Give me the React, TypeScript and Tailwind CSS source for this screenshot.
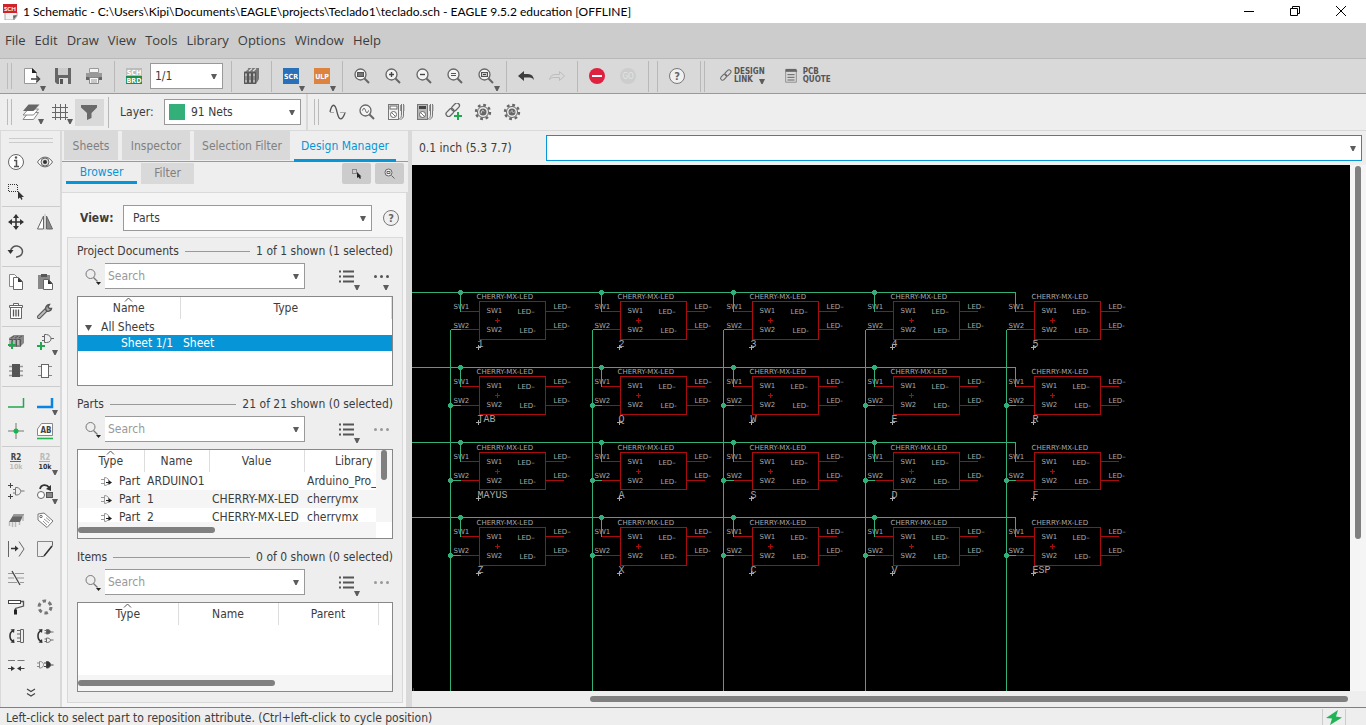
import React from 'react';
import clsx from 'clsx';

const UI_FONT = 'font-[DejaVu_Sans_Condensed,Noto_Sans,sans-serif]';
const TITLE_FONT = 'font-[Lato,Noto_Sans,sans-serif]';
const MENU_FONT = 'font-[Open_Sans,Noto_Sans,sans-serif]';

const Svg = ({ size = 18, children, className }: any) => (
  <svg
    width={size}
    height={size}
    viewBox="0 0 18 18"
    fill="none"
    stroke="#666"
    strokeWidth="1"
    className={clsx('shrink-0', className)}
    aria-hidden="true"
  >
    {children}
  </svg>
);

const Caret = ({ className }: any) => (
  <svg width="6" height="5" viewBox="0 0 6 5" className={className} aria-hidden="true">
    <path d="M0 0h6L3.600 5H2.400z" fill="#5c5c5c" />
  </svg>
);

const Magnifier = ({ children }: any) => (
  <Svg>
    <circle cx="7.500" cy="7.500" r="5.500" fill="#f4f4f4" stroke="#666" strokeWidth="1.300" />
    <path d="M11.500 11.500L16 16" stroke="#666" strokeWidth="2" />
    {children}
  </Svg>
);

const Gear = ({ children }: any) => (
  <Svg>
    <circle cx="9" cy="9" r="7" strokeWidth="2.400" strokeDasharray="2.750 2.750" stroke="#666" />
    <circle cx="9" cy="9" r="5.500" fill="#ececec" stroke="#666" />
    <circle cx="9" cy="9" r="3.500" fill="#666" stroke="none" />
    {children}
  </Svg>
);

const Meter = ({ dark }: any) => (
  <Svg>
    <rect x="1.500" y="1.500" width="10" height="15" fill={dark ? '#b8b8b8' : '#f2f2f2'} stroke="#777" />
    <rect x="3" y="3" width="7" height="3" fill={dark ? '#444' : '#fff'} strokeWidth={dark ? 0 : 1} />
    <circle cx="6.500" cy="11.500" r="3" fill="#fff" />
    <path d="M4.500 9.500l4 4M14.500 1v10c0 4-1.500 5-3 5M16.500 1v11c0 3-1.500 4-3 4.500" stroke="#777" />
    <path d="M13.500 2v6M17 2v6" stroke="#999" />
  </Svg>
);

const LinkShape = () => (
  <g strokeWidth="1.300">
    <rect x="7" y="2.500" width="9" height="5" rx="2.500" transform="rotate(-45 11.500 5)" />
    <rect x="1.500" y="8" width="9" height="5" rx="2.500" transform="rotate(-45 6 10.500)" />
  </g>
);

const Plus = ({ x, y, r = 3 }: any) => (
  <path d={`M${x - r} ${y}h${r * 2}M${x} ${y - r}v${r * 2}`} stroke="#23a650" strokeWidth="2" />
);

const icons: Record<string, React.ReactNode> = {
  newDoc: (
    <Svg>
      <path d="M1.500 1.500h8l4 4v11h-12z" fill="#fff" stroke="#999" />
      <path d="M9 1l5 5H9z" fill="#222" stroke="none" />
      <path d="M8 12h8M13.500 9l3 3-3 3" stroke="#444" strokeWidth="1.500" />
    </Svg>
  ),
  save: (
    <Svg>
      <path d="M1 1h16v16H3l-2-2z" fill="#666" stroke="none" />
      <path d="M4 1h10v7H4z" fill="#ccc" stroke="none" />
      <path d="M5 11h9v6H5z" fill="#ddd" stroke="none" />
      <path d="M6 12h3v5H6z" fill="#555" stroke="none" />
    </Svg>
  ),
  print: (
    <Svg>
      <path d="M4.500 1.500h9v4h-9z" fill="#f4f4f4" stroke="#999" />
      <path d="M1 6h16v7H1z" fill="#999" stroke="none" />
      <path d="M1 10h16v3H1z" fill="#666" stroke="none" />
      <path d="M4.500 10.500h9v6h-9z" fill="#f6f6f6" stroke="#888" />
      <path d="M6 13h6M6 15h6" stroke="#999" />
    </Svg>
  ),
  board: (
    <Svg>
      <rect x="1" y="1" width="16" height="8" fill="#bbb" stroke="none" />
      <rect x="1" y="9" width="16" height="8" fill="#1d8d48" stroke="none" />
      <text x="9" y="7.800" textAnchor="middle" fontSize="7" fontWeight="700" fill="#fff" stroke="none">SCH</text>
      <text x="9" y="15.800" textAnchor="middle" fontSize="7" fontWeight="700" fill="#fff" stroke="none">BRD</text>
    </Svg>
  ),
  books: (
    <Svg>
      <path d="M2 5l4-4h11v11l-3 5H2z" fill="#777" stroke="none" />
      <path d="M2.500 5.500h3v11h-3zM6.500 5.500h3v11h-3zM10.500 5.500h3v11h-3z" stroke="#555" fill="#8a8a8a" />
      <path d="M3 4l3-2.500M7 4l3-2.500M11 4l3-2.500" stroke="#ddd" strokeWidth="1.400" />
      <path d="M3 8h2M7 8h2M11 8h2M3 14h2M7 14h2M11 14h2" stroke="#ddd" />
    </Svg>
  ),
  scr: (
    <Svg>
      <rect x="1" y="1" width="16" height="16" fill="#2a70b8" stroke="none" />
      <text x="9" y="11.800" textAnchor="middle" fontSize="7" fontWeight="700" fill="#fff" stroke="none">SCR</text>
    </Svg>
  ),
  ulp: (
    <Svg>
      <rect x="1" y="1" width="16" height="16" fill="#dc8340" stroke="none" />
      <text x="9" y="11.800" textAnchor="middle" fontSize="7" fontWeight="700" fill="#fff" stroke="none">ULP</text>
    </Svg>
  ),
  zoomFit: <Magnifier><rect x="4.500" y="5.500" width="6" height="4" fill="#777" stroke="#555" /></Magnifier>,
  zoomIn: <Magnifier><path d="M5 7.500h5M7.500 5v5" stroke="#444" strokeWidth="1.400" /></Magnifier>,
  zoomOut: <Magnifier><path d="M5 7.500h5" stroke="#444" strokeWidth="1.400" /></Magnifier>,
  zoomRedraw: <Magnifier><path d="M5 6.500h5M5 8.500h5" stroke="#555" /></Magnifier>,
  zoomSelect: <Magnifier><rect x="4.500" y="5.500" width="6" height="4" stroke="#555" fill="#ccc" /><path d="M6 7.500h3" stroke="#444" /></Magnifier>,
  undo: <Svg><path d="M1 9l6-5v3h4c3.500 0 5.500 2 6 6-2-2.500-3.500-2.500-6-2.500H7v3.500z" fill="#3c3c3c" stroke="none" /></Svg>,
  redo: <Svg><path d="M16.500 9l-5-4.500v3H7c-3 0-5 2-5.500 5 2-2 3-2 5.500-2h4.500v3z" stroke="#bdbdbd" /></Svg>,
  stop: (
    <Svg>
      <circle cx="9" cy="9" r="8" fill="#df2140" stroke="none" />
      <path d="M4 9h10" stroke="#fff" strokeWidth="2" />
    </Svg>
  ),
  go: (
    <Svg>
      <circle cx="9" cy="9" r="8" fill="#cdcdcd" stroke="none" />
      <text x="9" y="12" textAnchor="middle" fontSize="8" fill="#e4e4e4" stroke="none">GO</text>
    </Svg>
  ),
  help: (
    <Svg>
      <circle cx="9" cy="9" r="7.500" fill="#f0f0f0" stroke="#777" />
      <text x="9" y="13" textAnchor="middle" fontSize="11" fontWeight="700" fill="#666" stroke="none">?</text>
    </Svg>
  ),
  layers: (
    <Svg>
      <path d="M6.500 9.500h10l-5 7H1z" fill="#fff" stroke="#888" />
      <path d="M6.500 6h10l-5 6H1z" fill="#fff" stroke="#888" />
      <path d="M6.500 1.500h11l-6 6.500H1z" fill="#666" stroke="none" />
    </Svg>
  ),
  grid: <Svg><path d="M4.500 1v16M9.500 1v16M14.500 1v16M1 4.500h16M1 9.500h16M1 14.500h16" stroke="#666" /></Svg>,
  funnel: <Svg><path d="M1 2h16v2.500L11.500 10v5L7 17v-7L1 4.500z" fill="#6a6a6a" stroke="none" /></Svg>,
  sine: (
    <Svg>
      <path d="M1 9c2-9 5-9 7 0s5 9 8 1" strokeWidth="1.300" stroke="#555" />
      <path d="M1 9.500h4M11 9.500h6" stroke="#aaa" />
    </Svg>
  ),
  zoomSine: <Magnifier><path d="M4.500 7.500c1-3 2-3 3 0s2 3 3 0" stroke="#555" /></Magnifier>,
  meter: <Meter />,
  meterDark: <Meter dark />,
  linkAdd: <Svg><g transform="translate(-1 -1)"><LinkShape /></g><Plus x={13} y={13} r={4} /></Svg>,
  gear: <Gear><path d="M7 10.500c1-4 2-4 3-2" stroke="#ddd" /></Gear>,
  gearSine: <Gear><path d="M6.500 9h1.500l1-2 1 3 1-1h1" stroke="#aaa" /></Gear>,

  info: (
    <Svg>
      <circle cx="9" cy="9" r="7.500" fill="#fff" />
      <path d="M7 7.500h2.500v6M7 13.500h5" stroke="#555" strokeWidth="1.500" />
      <circle cx="9" cy="4.500" r="1.200" fill="#555" stroke="none" />
    </Svg>
  ),
  eye: (
    <Svg>
      <path d="M1.500 9c4-6.500 11-6.500 15 0-4 6.500-11 6.500-15 0z" fill="#fff" />
      <circle cx="9" cy="9" r="4" fill="#ddd" />
      <circle cx="9" cy="9" r="2" fill="#333" stroke="none" />
    </Svg>
  ),
  groupSelect: (
    <Svg>
      <rect x="1.500" y="2.500" width="9" height="7" strokeDasharray="1 1" strokeDashoffset=".5" stroke="#333" shapeRendering="crispEdges" />
      <path d="M11 9v8l2-1.500 1.500 2.500 1-1L14.500 15H17z" fill="#333" stroke="none" />
    </Svg>
  ),
  move: (
    <Svg>
      <path d="M9 2v14M2 9h14" stroke="#333" strokeWidth="1.600" />
      <path d="M9 1l3 4H6zM9 17l3-4H6zM1 9l4-3v6zM17 9l-4-3v6z" fill="#333" stroke="none" />
    </Svg>
  ),
  mirror: (
    <Svg>
      <path d="M7.500 3v13H1.500z" fill="#fff" />
      <path d="M10.500 3v13h6z" fill="#888" />
      <path d="M9 1v16" stroke="#bbb" />
    </Svg>
  ),
  rotate: (
    <Svg>
      <path d="M3.500 9a6 5.500 0 1 1 5.500 6" stroke="#555" strokeWidth="1.500" />
      <path d="M0.500 8h6L3.500 12z" fill="#333" stroke="none" />
    </Svg>
  ),
  copy: (
    <Svg>
      <path d="M2.500 1.500h5l3 3v9h-8z" fill="#fff" stroke="#888" />
      <path d="M6.500 4.500h5l4 4v8h-9z" fill="#fff" />
      <path d="M11 4.500v4.500h4.500z" fill="#333" stroke="none" />
    </Svg>
  ),
  paste: (
    <Svg>
      <rect x="2" y="2" width="12" height="14" fill="#888" stroke="none" />
      <rect x="5" y="1" width="6" height="3" fill="#555" stroke="none" />
      <path d="M7.500 6.500h5l4 4v6h-9z" fill="#fff" />
      <path d="M12 6.500V11h4.500z" fill="#333" stroke="none" />
    </Svg>
  ),
  trash: (
    <Svg>
      <path d="M3.500 5.500h11V16.500h-11zM2.500 3.500h13v2h-13zM6.500 1.500h5v2h-5z" fill="#fff" />
      <path d="M6.500 7.500v7M9 7.500v7M11.500 7.500v7" stroke="#555" strokeWidth="1.300" />
    </Svg>
  ),
  wrench: (
    <Svg>
      <path d="M3 15l8-8" stroke="#555" strokeWidth="4" strokeLinecap="round" />
      <path d="M3 15l8-8" stroke="#bbb" strokeWidth="2" strokeLinecap="round" />
      <path d="M15.500 6.500a3.500 3.500 0 0 1-5 2.500 4 4 0 0 1 3-6.500L12 5l1.500 1.500z" fill="#aaa" stroke="#555" strokeWidth="1.400" />
    </Svg>
  ),
  addPart: (
    <Svg>
      <path d="M2 5l5-3h10v8l-4 4H2z" fill="#888" stroke="none" />
      <path d="M2.500 6.500h3v6M6.500 6.500h3v7M10.500 6.500h3v7M4 5l3-2M8 5l3-2M12 5l3-2" stroke="#555" />
      <path d="M3 7v5M7 7v5M11 7v5" stroke="#ddd" />
      <Plus x={5} y={12} r={4} />
    </Svg>
  ),
  addGate: (
    <Svg>
      <path d="M8.500 1.500h2c6 1 6 8 0 8h-2zM6 3.500h2.500M6 7.500h2.500M15 5.500h3" />
      <Plus x={5} y={13} r={4} />
    </Svg>
  ),
  chip: (
    <Svg>
      <path d="M2 4.500h3M2 9h3M2 13.500h3M13 4.500h3M13 9h3M13 13.500h3" stroke="#999" strokeWidth="1.500" />
      <rect x="5" y="2" width="8" height="13" fill="#555" stroke="none" />
    </Svg>
  ),
  chipOpen: (
    <Svg>
      <path d="M2 4.500h3M2 13.500h3M13 4.500h3M13 13.500h3" stroke="#888" />
      <rect x="5.500" y="2.500" width="7" height="13" fill="#fff" />
    </Svg>
  ),
  net: <Svg><path d="M1 14h15.500V5" stroke="#23a650" strokeWidth="1.500" /></Svg>,
  bus: <Svg><path d="M1 14h15V5" stroke="#0a84e0" strokeWidth="2.500" /></Svg>,
  junction: (
    <Svg>
      <path d="M9 1v16M1 9h16" stroke="#777" />
      <circle cx="9" cy="9" r="2.500" fill="#1bb34d" stroke="none" />
    </Svg>
  ),
  label: (
    <Svg>
      <path d="M1.500 7l4-5.500h11v12h-15z" fill="#fff" stroke="#888" />
      <path d="M1 16.500h16" stroke="#23b450" strokeWidth="1.600" />
      <text x="10" y="10.500" textAnchor="middle" fontSize="8" fontWeight="700" fill="#444" stroke="none">AB</text>
    </Svg>
  ),
  nameTag: (
    <Svg>
      <text x="9" y="7" textAnchor="middle" fontSize="8" fontWeight="700" fill="#444" stroke="none">R2</text>
      <path d="M3 8.500h11" stroke="#666" />
      <text x="9" y="16" textAnchor="middle" fontSize="7" fontWeight="700" fill="#bbb" stroke="none">10k</text>
    </Svg>
  ),
  valueTag: (
    <Svg>
      <text x="9" y="7" textAnchor="middle" fontSize="8" fontWeight="700" fill="#bbb" stroke="none">R2</text>
      <path d="M3 8.500h11" stroke="#aaa" />
      <text x="9" y="16" textAnchor="middle" fontSize="7" fontWeight="700" fill="#333" stroke="none">10k</text>
    </Svg>
  ),
  gateSwap: (
    <Svg>
      <path d="M1 3.500h5M3.500 1v5M1 14.500h5M3.500 12v5" stroke="#444" />
      <path d="M8.500 5.500h1.500c5 1 5 7 0 7.500H8.500zM6 7.500h2.500M6 11h2.500M14 9h3.500" stroke="#777" />
    </Svg>
  ),
  replace: (
    <Svg>
      <circle cx="5" cy="13" r="3.500" fill="#fff" />
      <rect x="10.500" y="10.500" width="6" height="5" fill="#888" stroke="#555" />
      <path d="M4 7c1-5 7-5 9-1.500" stroke="#333" strokeWidth="1.800" />
      <path d="M15 3v6l-5-2z" fill="#333" stroke="none" />
    </Svg>
  ),
  smash: (
    <Svg>
      <path d="M7 3h10l-4 8H2z" fill="#666" stroke="none" />
      <path d="M7 3h10l-1 2.500H5.500z" fill="#999" stroke="none" />
      <path d="M2.500 15v-4M5.500 16v-5M8.500 16v-5M12.500 14v-3M16 10V5" stroke="#bbb" strokeWidth="1.500" />
    </Svg>
  ),
  tag: (
    <Svg>
      <path d="M2 3l6-1 9 8-6 6.500L2 9z" fill="#fff" stroke="#777" />
      <circle cx="5" cy="5.500" r="1.200" />
      <path d="M8 8l5 4M10 6.500l4 3.500M7 10l4 4" stroke="#999" />
    </Svg>
  ),
  split: (
    <Svg>
      <path d="M1.500 1v16M12 1.500l5 7.500-5 7.500" />
      <path d="M4 8.500h6" stroke="#333" strokeWidth="1.500" />
      <path d="M8 5.500l3.500 3L8 11.500z" fill="#333" stroke="none" />
    </Svg>
  ),
  miter: (
    <Svg>
      <path d="M16.500 1.500h-15v15h3" stroke="#888" />
      <path d="M16.500 1.500v4l-9 11h-3" />
      <path d="M16 6l-8 10" stroke="#333" strokeWidth="1.500" />
    </Svg>
  ),
  ripup: (
    <Svg>
      <path d="M1 4.500h5M1 9h6M1 13.500h9M8 4.500h9M10 9h7M13 13.500h4" stroke="#999" />
      <path d="M5 2l8 14" stroke="#444" strokeWidth="1.300" />
    </Svg>
  ),
  paint: (
    <Svg>
      <rect x="1.500" y="2.500" width="12" height="3" fill="#fff" stroke="#444" />
      <path d="M14 3.500h2.500V8l-8 2.500V12" stroke="#555" strokeWidth="1.300" />
      <path d="M8.500 11.500v5" stroke="#222" strokeWidth="3" />
    </Svg>
  ),
  array: (
    <Svg><circle cx="9" cy="9" r="6" stroke="#777" strokeWidth="3" strokeDasharray="3.500 2.780" /></Svg>
  ),
  pinSwap: (
    <Svg>
      <path d="M6 4C2 5 2 13 6 14" stroke="#333" strokeWidth="1.600" />
      <path d="M3.500 2.500l4-.5L7 6zM3.500 15.500l4 .5-.500-4z" fill="#333" stroke="none" />
      <path d="M13.500 2.500h3v13h-3zM10 3.500h3.500M10 7h3.500M10 11h3.500M10 14.500h3.500" />
    </Svg>
  ),
  gatesSwap: (
    <Svg>
      <path d="M5 4C1 5 1 13 5 14" stroke="#333" strokeWidth="1.600" />
      <path d="M2.500 2.500l4-.5L6 6zM2.500 15.500l4 .5-.500-4z" fill="#333" stroke="none" />
      <path d="M10.500 2.500h1c4 .5 4 4 0 4.500h-1zM8.500 3.500h2M8.500 6h2M14.500 5h3" fill="#555" />
      <path d="M10.500 11h1c4 .5 4 4 0 4.500h-1zM8.500 12h2M8.500 14.500h2M14.500 13h3" />
    </Svg>
  ),
  gap: (
    <Svg>
      <path d="M1 4.500h7M10.500 4.500h7" stroke="#777" />
      <path d="M1 12.500h4M13 12.500h4.500" stroke="#444" />
      <path d="M4 10l4 2.500-4 2.500zM14 10l-4 2.500 4 2.500z" fill="#333" stroke="none" />
    </Svg>
  ),
  gatesJoin: (
    <Svg>
      <path d="M3.500 5.500h1c4 .5 4 6 0 6.500h-1zM1 7h2.500M1 10.500h2.500" stroke="#888" />
      <path d="M10.500 5.500h1c4 .5 4 6 0 6.500h-1zM8 7h2.500M8 10.500h2.500M14.500 9h3" fill="#333" stroke="#444" />
    </Svg>
  ),
};

const ToolButton = ({ name, icon, arrow, active, disabled, className }: any) => (
  <button
    type="button"
    aria-label={name}
    disabled={disabled}
    className={clsx('relative flex shrink-0 items-center justify-center pr-px pb-px', active && 'bg-[#d9d9d9]', className)}
  >
    {icons[icon]}
    {arrow && <Caret className="absolute right-0.5 bottom-0.5" />}
  </button>
);

const Separator = () => <span className="mx-1 h-[31px] w-px shrink-0 bg-[#b8b8b8]" />;

const Handle = () => <span className="mr-[5px] ml-[7px] h-[26px] w-[5px] shrink-0 border-x border-[#bbb]" />;

const SelectBox = ({ label, options, className, pad = 'pl-1' }: any) => (
  <span className={clsx('relative flex', className)}>
    <select
      aria-label={label}
      className={clsx('h-full w-full appearance-none border border-[#999] bg-white text-[#3c3c3c] outline-none', pad)}
    >
      {options.map((o: string) => <option key={o}>{o}</option>)}
    </select>
    <Caret className="pointer-events-none absolute top-[11px] right-1.5" />
  </span>
);

const TitleBar = () => (
  <header className={clsx('flex h-[23px] shrink-0 items-center bg-white pl-[3px] text-xs text-black', TITLE_FONT)}>
    <svg width="16" height="16" viewBox="0 0 16 16" aria-hidden="true">
      <path d="M2 8h12v4l-3 4H2z" fill="#f4f4f4" stroke="#aaa" />
      <path d="M14 11l-4 .500.500 4.500z" fill="#666" />
      <rect width="14" height="9" fill="#cf2229" />
      <text x="7" y="7" textAnchor="middle" fontSize="6" fontWeight="700" fill="#fff">SCH</text>
    </svg>
    <h1 className="ml-1 grow whitespace-pre">
      1 Schematic - C:\Users\Kipi\Documents\EAGLE\projects\Teclado1\teclado.sch - EAGLE 9.5.2 education [OFFLINE]
    </h1>
    <div className="flex pr-0.5 pb-0.5">
      <button type="button" aria-label="Minimize" className="flex w-[46px] justify-center">
        <svg width="10" height="10" viewBox="0 0 10 10"><path d="M0 5.500h10" stroke="#000" /></svg>
      </button>
      <button type="button" aria-label="Restore" className="flex w-[46px] justify-center">
        <svg width="10" height="10" viewBox="0 0 10 10" fill="none" stroke="#000">
          <path d="M.500 2.500h7v7h-7zM2.500 2.500v-2h7v7h-2" />
        </svg>
      </button>
      <button type="button" aria-label="Close" className="flex w-[46px] justify-center">
        <svg width="10" height="10" viewBox="0 0 10 10"><path d="M0 0l10 10M10 0L0 10" stroke="#000" /></svg>
      </button>
    </div>
  </header>
);

const MENUS = ['File', 'Edit', 'Draw', 'View', 'Tools', 'Library', 'Options', 'Window', 'Help'];

const MenuBar = () => (
  <nav className={clsx('flex h-9 shrink-0 items-center gap-[9px] border-b border-[#b8b8b8] bg-[#ccc] pt-px pl-[5px] text-[13px]', MENU_FONT)}>
    {MENUS.map((m) => <button type="button" key={m}>{m}</button>)}
  </nav>
);

const MainToolbar = () => {
  const cell = 'h-[34px] w-[31px]';
  return (
    <div role="toolbar" aria-label="Main" className="flex h-[35px] shrink-0 items-center border-b border-[#999] bg-[#d9d9d9]">
      <Handle />
      <ToolButton name="New" icon="newDoc" arrow className={cell} />
      <ToolButton name="Save" icon="save" className={cell} />
      <ToolButton name="Print" icon="print" className={cell} />
      <Separator />
      <ToolButton name="Board" icon="board" className={cell} />
      <SelectBox label="Sheet" options={['1/1']} className="mr-1 h-[26px] w-[73px]" />
      <Separator />
      <ToolButton name="Library manager" icon="books" className={cell} />
      <Separator />
      <ToolButton name="Script" icon="scr" arrow className={cell} />
      <ToolButton name="User language program" icon="ulp" arrow className={cell} />
      <Separator />
      <ToolButton name="Zoom to fit" icon="zoomFit" className={cell} />
      <ToolButton name="Zoom in" icon="zoomIn" className={cell} />
      <ToolButton name="Zoom out" icon="zoomOut" className={cell} />
      <ToolButton name="Redraw" icon="zoomRedraw" className={cell} />
      <ToolButton name="Zoom select" icon="zoomSelect" arrow className={cell} />
      <Separator />
      <ToolButton name="Undo" icon="undo" className={cell} />
      <ToolButton name="Redo" icon="redo" disabled className={cell} />
      <Separator />
      <ToolButton name="Stop" icon="stop" className={cell} />
      <ToolButton name="Go" icon="go" disabled className={cell} />
      <Separator />
      <Separator />
      <ToolButton name="Help" icon="help" className={cell} />
      <span className="mr-3.5 ml-[7px] h-[31px] w-[5px] shrink-0 border-x border-[#b8b8b8]" />
      <button type="button" className="flex items-center text-left text-[8px] leading-[8px] font-bold text-[#555]">
        <Svg size={14} className="mr-px"><LinkShape /></Svg>
        <span>
          DESIGN
          <br />
          LINK
        </span>
        <Caret className="-ml-1.5 mt-2.5" />
      </button>
      <button type="button" className="ml-[18px] flex items-center text-left text-[8px] leading-[8px] font-bold text-[#555]">
        <Svg size={16} className="mr-1">
          <path d="M3 2v14h12V2z" stroke="#888" />
          <path d="M3 3.500h13M5 7.500h8M5 10.500h8M5 13.500h8" stroke="#555" />
          <path d="M3 2.500h12" strokeWidth="3" />
        </Svg>
        <span>
          PCB
          <br />
          QUOTE
        </span>
      </button>
    </div>
  );
};

const LayerToolbar = () => {
  const cell = 'h-[27px] w-[29px]';
  return (
    <div role="toolbar" aria-label="Layer" className="flex h-[37px] shrink-0 items-center border-b border-[#d9d9d9]">
      <Handle />
      <ToolButton name="Layers" icon="layers" arrow className={cell} />
      <ToolButton name="Grid" icon="grid" arrow className={cell} />
      <ToolButton name="Selection filter" icon="funnel" active className={cell} />
      <Separator />
      <span className="ml-[7px] w-11">Layer:</span>
      <span className="relative flex h-[26px] w-[137px]">
        <SelectBox label="Layer" options={['91 Nets']} className="h-full w-full" pad="pl-[26px]" />
        <span className="pointer-events-none absolute top-[5px] left-[5px] size-4 bg-[#33b07a]" />
      </span>
      <span className="ml-[5px] h-9 w-0.5 bg-[#d9d9d9]" />
      <span className="mr-[5px] ml-1.5 h-[26px] w-[5px] shrink-0 border-x border-[#bbb]" />
      <ToolButton name="Simulate" icon="sine" className={cell} />
      <ToolButton name="Probe" icon="zoomSine" className={cell} />
      <ToolButton name="Voltage meter" icon="meter" className={cell} />
      <ToolButton name="Current meter" icon="meterDark" className={cell} />
      <ToolButton name="Add link" icon="linkAdd" className={cell} />
      <ToolButton name="Simulation setup" icon="gear" className={cell} />
      <ToolButton name="Simulation settings" icon="gearSine" className={cell} />
    </div>
  );
};

// [name, icon, has drop-down]
const PALETTE: any[][] = [
  [['Info', 'info'], ['Show', 'eye'], ['Group', 'groupSelect']],
  [['Move', 'move'], ['Mirror', 'mirror'], ['Rotate', 'rotate']],
  [['Copy', 'copy'], ['Paste', 'paste'], ['Delete', 'trash'], ['Change', 'wrench']],
  [['Add part', 'addPart'], ['Add gate', 'addGate', true], ['Package', 'chip'], ['Device', 'chipOpen']],
  [['Net', 'net'], ['Bus', 'bus', true], ['Junction', 'junction'], ['Label', 'label']],
  [
    ['Name', 'nameTag'], ['Value', 'valueTag', true], ['Invoke', 'gateSwap'], ['Replace', 'replace', true],
    ['Smash', 'smash'], ['Attribute', 'tag'], ['Split', 'split'], ['Miter', 'miter'], ['Ripup', 'ripup'],
    null, ['Paint roller', 'paint'], ['Array', 'array'], ['Pin swap', 'pinSwap'], ['Gate swap', 'gatesSwap'],
    ['Slice', 'gap'], ['Module', 'gatesJoin'],
  ],
];

const Palette = () => (
  <aside className="flex w-[62px] shrink-0 flex-col border-r-2 border-l border-[#d9d9d9] pl-px">
    <span className="mx-[7px] mt-[7px] mb-[5px] h-[5px] shrink-0 border-y border-[#ccc]" />
    {PALETTE.map((group, i) => (
      <div
        key={group[0][1]}
        className={clsx('grid shrink-0 grid-cols-2', i < PALETTE.length - 1 && 'mb-px border-b border-[#ccc]')}
      >
        {group.map((t, j) => (t
          ? <ToolButton key={t[1]} name={t[0]} icon={t[1]} arrow={t[2]} className="h-[29px]" />
          : <span key={`gap${j}`} />))}
      </div>
    ))}
    <button type="button" aria-label="More tools" className="mt-2 flex justify-center">
      <svg width="10" height="10" viewBox="0 0 10 10" fill="none" stroke="#444" strokeWidth="1.200">
        <path d="M1 1l4 2.500L9 1M1 5.500L5 8l4-2.500" />
      </svg>
    </button>
  </aside>
);

const HThumb = ({ width }: any) => (
  <div className="flex h-4 shrink-0 items-center bg-[#f5f5f5]">
    <span className={clsx('h-1.5 rounded-full bg-[#808080]', width)} />
  </div>
);

const Section = ({ title, count, more, children }: any) => (
  <section className="mb-1.5 flex flex-col last:mb-0">
    <div className="flex h-6 items-center whitespace-pre">
      <h2>{title}</h2>
      <span className="mx-1.5 h-px grow bg-[#999]" />
      <span>{count}</span>
    </div>
    <div className="flex h-[26px] items-center">
      <button type="button" aria-label={`${title} search options`} className="relative ml-1.5 flex w-[22px]">
        <Svg>
          <circle cx="7.500" cy="7" r="4.500" stroke="#777" />
          <path d="M10.500 10.500l4 4" stroke="#777" strokeWidth="1.300" />
        </Svg>
        <svg width="5" height="3" className="absolute right-1 bottom-0"><path d="M0 0h5L2.500 3z" fill="#222" /></svg>
      </button>
      <label className="relative flex h-full grow">
        <input
          aria-label={`Search ${title}`}
          placeholder="Search"
          className="h-full w-full min-w-0 border border-l-0 border-[#999] bg-white pl-[3px] outline-none placeholder:text-[#999]"
        />
        <Caret className="absolute top-[11px] right-1.5" />
      </label>
      <button type="button" aria-label={`${title} list`} className="relative ml-[34px] flex h-full w-6 items-center">
        <svg width="15" height="13" viewBox="0 0 15 13" fill="none" stroke="#555" strokeWidth="2">
          <path d="M0 1.500h2M4 1.500h11M0 6.500h2M4 6.500h11M0 11.500h2M4 11.500h11" />
        </svg>
        <Caret className="absolute right-[3px] -bottom-px" />
      </button>
      <button type="button" aria-label={`${title} more`} className="relative ml-[11px] flex h-full w-[19px] items-center">
        <svg width="15" height="3" viewBox="0 0 15 3" fill={more ? '#555' : '#999'}>
          <circle cx="1.500" cy="1.500" r="1.500" />
          <circle cx="7.500" cy="1.500" r="1.500" />
          <circle cx="13.500" cy="1.500" r="1.500" />
        </svg>
        {more && <Caret className="absolute right-1 -bottom-px" />}
      </button>
    </div>
    <div className="mt-[7px] flex h-[90px] flex-col border border-[#888] bg-white">{children}</div>
  </section>
);

const HeadCell = ({ children, sorted, last }: any) => (
  <th className={clsx('relative p-0 font-normal', !last && 'border-r border-[#ddd]')}>
    {sorted && (
      <svg width="9" height="5" viewBox="0 0 9 5" fill="none" stroke="#555" className="absolute inset-x-0 top-0 mx-auto">
        <path d="M1 4.500l3.500-3.500L8 4.500" />
      </svg>
    )}
    {children}
  </th>
);

const PARTS = [
  { name: 'ARDUINO1', value: '', library: 'Arduino_Pro_Micro' },
  { name: '1', value: 'CHERRY-MX-LED', library: 'cherrymx' },
  { name: '2', value: 'CHERRY-MX-LED', library: 'cherrymx' },
];

const Browser = () => (
  <div className="mr-[3px] mb-1 ml-1 border border-[#d9d9d9] bg-[#eee] px-[9px] pt-px pb-2.5">
    <Section title="Project Documents" count="1 of 1 shown (1 selected)" more>
      <table className="w-full table-fixed">
        <colgroup>
          <col className="w-[102px]" />
          <col />
        </colgroup>
        <thead>
          <tr className="h-[22px]">
            <HeadCell sorted>Name</HeadCell>
            <HeadCell>Type</HeadCell>
          </tr>
        </thead>
        <tbody>
          <tr className="h-4 leading-4">
            <td colSpan={2} className="p-0 pl-[7px]">
              <svg width="7" height="6" className="mr-[9px] inline"><path d="M0 0h7L3.500 6z" fill="#555" /></svg>
              All Sheets
            </td>
          </tr>
          <tr className="h-4 bg-[#0696d7] leading-4 text-white">
            <td className="p-0 pl-[43px] whitespace-nowrap">Sheet 1/1</td>
            <td className="p-0 pl-[3px]">Sheet</td>
          </tr>
        </tbody>
      </table>
    </Section>
    <Section title="Parts" count="21 of 21 shown (0 selected)">
      <div className="flex min-h-0 grow">
        <div className="flex w-0 grow flex-col">
          <div className="min-h-0 grow overflow-hidden">
            <table className="w-[325px] table-fixed">
              <colgroup>
                <col className="w-[66px]" />
                <col className="w-[65px]" />
                <col className="w-[95px]" />
                <col />
              </colgroup>
              <thead>
                <tr className="h-[22px]">
                  <HeadCell sorted>Type</HeadCell>
                  <HeadCell>Name</HeadCell>
                  <HeadCell>Value</HeadCell>
                  <HeadCell last>Library</HeadCell>
                </tr>
              </thead>
              <tbody>
                {PARTS.map((p) => (
                  <tr key={p.name} className="h-[18px] leading-[18px] even:bg-[#f5f5f5]">
                    <td className="p-0 whitespace-nowrap">
                      <span className="flex items-center gap-[7px] pl-[23px]">
                        <svg width="11" height="11" viewBox="0 0 11 11" fill="none" stroke="#999">
                          <path d="M3.500 1.500c6 0 6 8 0 8zM0 3.500h3.500M0 7.500h3.500" />
                          <path d="M5 6.500h3" stroke="#222" />
                          <path d="M7.500 4l3.500 2.500L7.500 9z" fill="#222" stroke="none" />
                        </svg>
                        Part
                      </span>
                    </td>
                    <td className="p-0 pl-[3px] whitespace-nowrap">{p.name}</td>
                    <td className="p-0 pl-[3px] whitespace-nowrap">{p.value}</td>
                    <td className="p-0 pl-[3px] whitespace-nowrap">{p.library}</td>
                  </tr>
                ))}
              </tbody>
            </table>
          </div>
          <HThumb width="w-[137px]" />
        </div>
        <div className="mb-4 flex w-4 flex-col items-center bg-[#f5f5f5]">
          <span className="h-[30px] w-1.5 rounded-full bg-[#808080]" />
        </div>
      </div>
    </Section>
    <Section title="Items" count="0 of 0 shown (0 selected)">
      <div className="grow">
        <table className="w-full table-fixed">
          <colgroup>
            <col className="w-[100px]" />
            <col className="w-[100px]" />
            <col className="w-[100px]" />
            <col />
          </colgroup>
          <thead>
            <tr className="h-[22px]">
              <HeadCell sorted>Type</HeadCell>
              <HeadCell>Name</HeadCell>
              <HeadCell>Parent</HeadCell>
              <HeadCell last />
            </tr>
          </thead>
        </table>
      </div>
      <HThumb width="w-[197px]" />
    </Section>
  </div>
);

const TABS = [
  { name: 'Sheets', width: 'w-[54px]' },
  { name: 'Inspector', width: 'w-[68px]' },
  { name: 'Selection Filter', width: 'w-24' },
  { name: 'Design Manager', width: 'w-[102px]', active: true },
];

const DesignManager = () => (
  <aside className="flex w-[350px] shrink-0 flex-col border-r-4 border-[#d9d9d9]">
    <div role="tablist" className="flex h-[31px] shrink-0 gap-1 border-b border-[#999] pl-0.5">
      {TABS.map((t) => (
        <button
          key={t.name}
          type="button"
          role="tab"
          aria-selected={!!t.active}
          className={clsx(
            'whitespace-nowrap',
            t.width,
            t.active ? 'h-[31px] border-b-3 border-[#0696d7] pt-0.5 text-[#0696d7]' : 'h-[29px] bg-[#d9d9d9] text-[#808080]',
          )}
        >
          {t.name}
        </button>
      ))}
    </div>
    <div className="flex h-[30px] shrink-0 items-start gap-1 pt-px pr-1 pl-1">
      <button type="button" className="h-[21px] w-[71px] border-b-3 border-[#0696d7] pt-px leading-[17px] text-[#0696d7]">Browser</button>
      <button type="button" className="h-[21px] w-[53px] bg-[#d9d9d9] pb-0.5 text-[#808080]">Filter</button>
      <button type="button" aria-label="Select in drawing" className="ml-auto flex h-[21px] w-[29px] items-center justify-center rounded-xs bg-[#ccc]">
        <svg width="11" height="11" viewBox="0 0 11 11">
          <rect x="1.500" y="1.500" width="4" height="4" fill="none" stroke="#888" />
          <path d="M6 4v6l1.500-1L9 11l1-1-1-1.500h1.500z" fill="#222" />
        </svg>
      </button>
      <button type="button" aria-label="Zoom to selection" className="flex h-[21px] w-[29px] items-center justify-center rounded-xs bg-[#ccc]">
        <svg width="11" height="11" viewBox="0 0 11 11" fill="none" stroke="#666">
          <circle cx="4.500" cy="4.500" r="3.500" fill="#eee" />
          <path d="M3 3.500h3v2H3zM7.500 7.500l3 3" />
        </svg>
      </button>
    </div>
    <div className="flex grow flex-col border-t border-r-2 border-b border-[#d9d9d9] bg-[#f5f5f5] pl-px">
      <div className="mt-3 mb-1.5 flex h-[26px] items-center pr-1.5 pl-[17px]">
        <span className="w-[43px] font-bold">View:</span>
        <SelectBox label="View" options={['Parts']} className="h-full grow" pad="pl-[9px]" />
        <button type="button" aria-label="View help" className="ml-2.5">{icons.help}</button>
      </div>
      <Browser />
    </div>
  </aside>
);

const NET = '#33b07a';
const SYMBOL = '#a80c0c';
const TEXT = '#a8a8a8';

const COLUMNS = [
  { pin: 48, wire: 38 },
  { pin: 189, wire: 180 },
  { pin: 321, wire: 311 },
  { pin: 462, wire: 453 },
  { pin: 603, wire: 594 },
];

const ROWS = [
  { bus: 127, top: 136, height: 38, sw2: 164, names: ['1', '2', '3', '4', '5'] },
  { bus: 202, top: 211, height: 38, sw2: 240, names: ['TAB', 'Q', 'W', 'E', 'R'] },
  { bus: 277, top: 287, height: 37, sw2: 315, names: ['MAYUS', 'A', 'S', 'D', 'F'] },
  { bus: 352, top: 362, height: 38, sw2: 390, names: ['Z', 'X', 'C', 'V', 'ESP'] },
];

const KeySwitch = ({ pin, wire, row, name, first, last }: any) => {
  const { bus, top, height, sw2 } = row;
  const sw1 = bus + 19;
  const box = pin + 19;
  return (
    <g>
      <g stroke={SYMBOL}>
        <rect x={box} y={top} width="66" height={height} />
        <path d={`M${pin} ${sw1}H${box}M${pin} ${sw2}H${box}M${box + 66} ${sw1}h18M${box + 66} ${sw2}h18`} />
        <path d={`M${box + 16} ${top + 19}h4M${box + 18} ${top + 17}v4`} strokeLinecap="square" />
      </g>
      <g fill={TEXT} stroke="none" fontSize="7">
        <text x={box - 3} y={top - 3}>CHERRY-MX-LED</text>
        <text x={pin - 7} y={bus + 16}>SW1</text>
        <text x={pin - 7} y={bus + 35}>SW2</text>
        <text x={box + 7} y={top + 11}>SW1</text>
        <text x={box + 7} y={top + 30}>SW2</text>
        <text x={box + 38} y={top + 12}>LED–</text>
        <text x={box + 40} y={top + 31}>LED-</text>
        <text x={box + 74} y={bus + 16}>LED–</text>
        <text x={box + 74} y={bus + 35}>LED-</text>
        <text x={box - 2} y={top + 45} fontSize="10" fontFamily="Liberation Mono, monospace">{name}</text>
      </g>
      <path
        d={`M${box - 3} ${top + 46}h4M${box - 1} ${top + 44}v4`}
        stroke={TEXT}
        strokeLinecap="square"
      />
      <path d={`M${pin} ${bus}V${sw1}M${wire} ${sw2}H${pin}`} stroke={NET} />
      {!last && <circle cx={pin} cy={bus} r="2.500" fill={NET} stroke="none" />}
      {!first && <circle cx={wire} cy={sw2} r="2.500" fill={NET} stroke="none" />}
    </g>
  );
};

const Schematic = () => (
  <svg className="h-full w-full font-[DejaVu_Sans,sans-serif]" fill="none" role="img" aria-label="Schematic">
    <g transform="translate(.5 .5)" shapeRendering="crispEdges">
      {ROWS.map((r) => <path key={r.bus} d={`M-1 ${r.bus}H603`} stroke={NET} />)}
      {COLUMNS.map((c) => <path key={c.wire} d={`M${c.wire} 164V2000`} stroke={NET} />)}
      {ROWS.map((r, i) => COLUMNS.map((c, j) => (
        <KeySwitch
          key={r.names[j]}
          pin={c.pin}
          wire={c.wire}
          row={r}
          name={r.names[j]}
          first={i === 0}
          last={j === COLUMNS.length - 1}
        />
      )))}
      <path d="M1 522v5" stroke={SYMBOL} />
    </g>
  </svg>
);

const Editor = () => (
  <main className="flex min-w-0 grow flex-col">
    <div className="flex h-[34px] shrink-0 items-center pr-1 pl-[7px]">
      <span className="w-[127px]">0.1 inch (5.3 7.7)</span>
      <label className="relative flex h-[26px] grow">
        <input aria-label="Command line" className="h-full w-full border border-[#0696d7] bg-white px-1 outline-none" />
        <Caret className="absolute top-[11px] right-1.5" />
      </label>
    </div>
    <div className="flex min-h-0 grow">
      <div className="h-full min-w-0 grow overflow-hidden bg-black"><Schematic /></div>
      <div className="flex w-4 shrink-0 flex-col items-center bg-[#f5f5f5] pt-px">
        <span className="h-[71%] w-1.5 rounded-full bg-[#808080]" />
      </div>
    </div>
    <div className="flex h-4 shrink-0 items-center justify-end pr-[18px]">
      <span className="h-1.5 w-[81%] rounded-full bg-[#808080]" />
    </div>
  </main>
);

const App = () => (
  <div className={clsx('flex h-screen flex-col overflow-hidden bg-[#eee] text-xs text-[#3c3c3c]', UI_FONT)}>
    <TitleBar />
    <MenuBar />
    <MainToolbar />
    <LayerToolbar />
    <div className="flex min-h-0 grow">
      <Palette />
      <DesignManager />
      <Editor />
    </div>
    <footer className="flex h-[18px] shrink-0 items-center border-t border-[#808080] pl-1.5 whitespace-pre">
      <span className="grow pt-0.5">Left-click to select part to reposition attribute. (Ctrl+left-click to cycle position)</span>
      <span className="mr-5 border-x border-[#ccc] px-[3px]">
        <svg width="16" height="16" viewBox="0 0 16 16" aria-hidden="true">
          <path d="M12 1L0 9l6 .500L4 16l12-7.500-6-1z" fill="#1fb455" />
        </svg>
      </span>
    </footer>
  </div>
);

export default App;
